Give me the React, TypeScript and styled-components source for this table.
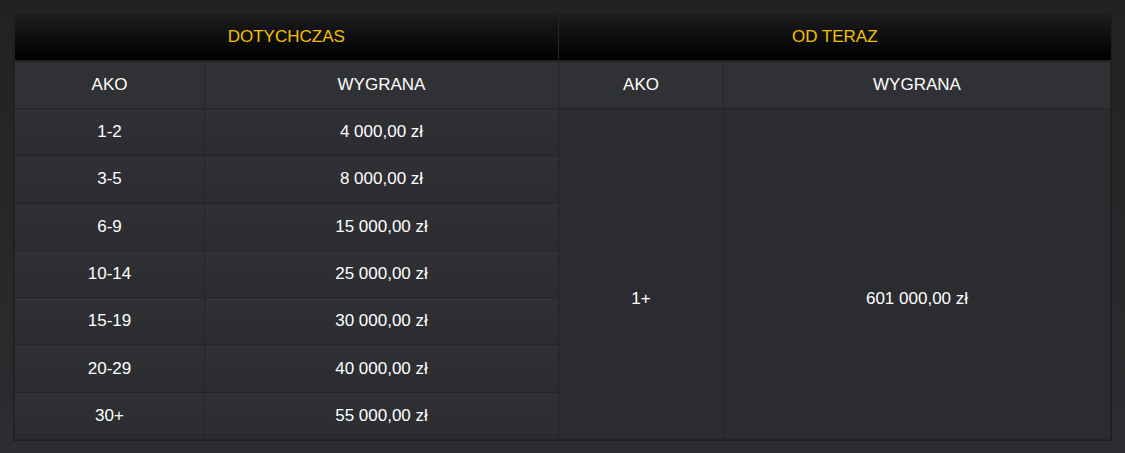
import React from 'react'
import styled, { createGlobalStyle } from 'styled-components'

const GlobalStyle = createGlobalStyle`
  html, body {
    margin: 0;
    padding: 0;
  }
  body {
    font-family: 'Liberation Sans', Arial, sans-serif;
    background: linear-gradient(to bottom, #212221 0%, #2c2d30 100%);
    min-height: 453px;
  }
`

const Page = styled.div`
  padding: 14px 15px 14px 14px;
  height: 453px;
  box-sizing: border-box;
`

const Table = styled.table`
  width: 1096px;
  border-collapse: collapse;
  table-layout: fixed;
  color: #fff;
  font-size: 17px;
  text-align: center;
  outline: 1px solid #1d1e20;
`

const GroupCell = styled.th`
  height: 46px;
  padding: 0;
  font-weight: normal;
  color: #f6c000;
  background: linear-gradient(to bottom, #1c1d1f 0%, #000 100%);
  border-right: 1px solid #26272a;
  border-bottom: 2px solid #222325;
  &:last-child {
    border-right: none;
  }
`

const HeadCell = styled.th`
  height: 46px;
  padding: 0;
  font-weight: normal;
  background: #303134;
  border: 1px solid #232426;
  border-top: none;
`

const Cell = styled.td<{ merged?: boolean }>`
  height: 46.3px;
  padding: ${({ merged }) => (merged ? '50px 0 0' : '0')};
  border: 1px solid #232426;
  background: ${({ merged }) =>
    merged ? '#2b2c2f' : 'linear-gradient(to bottom, #303134 0%, #2b2c2f 100%)'};
`

const rows = [
  ['1-2', '4 000,00 zł'],
  ['3-5', '8 000,00 zł'],
  ['6-9', '15 000,00 zł'],
  ['10-14', '25 000,00 zł'],
  ['15-19', '30 000,00 zł'],
  ['20-29', '40 000,00 zł'],
  ['30+', '55 000,00 zł'],
]

export default function App() {
  return (
    <>
      <GlobalStyle />
      <Page>
        <Table>
          <colgroup>
            <col style={{ width: 190 }} />
            <col style={{ width: 354 }} />
            <col style={{ width: 165 }} />
            <col style={{ width: 387 }} />
          </colgroup>
          <thead>
            <tr>
              <GroupCell colSpan={2}>DOTYCHCZAS</GroupCell>
              <GroupCell colSpan={2}>OD TERAZ</GroupCell>
            </tr>
            <tr>
              <HeadCell>AKO</HeadCell>
              <HeadCell>WYGRANA</HeadCell>
              <HeadCell>AKO</HeadCell>
              <HeadCell>WYGRANA</HeadCell>
            </tr>
          </thead>
          <tbody>
            {rows.map(([ako, win], i) => (
              <tr key={ako}>
                <Cell>{ako}</Cell>
                <Cell>{win}</Cell>
                {i === 0 && (
                  <>
                    <Cell merged rowSpan={rows.length}>1+</Cell>
                    <Cell merged rowSpan={rows.length}>601 000,00 zł</Cell>
                  </>
                )}
              </tr>
            ))}
          </tbody>
        </Table>
      </Page>
    </>
  )
}
